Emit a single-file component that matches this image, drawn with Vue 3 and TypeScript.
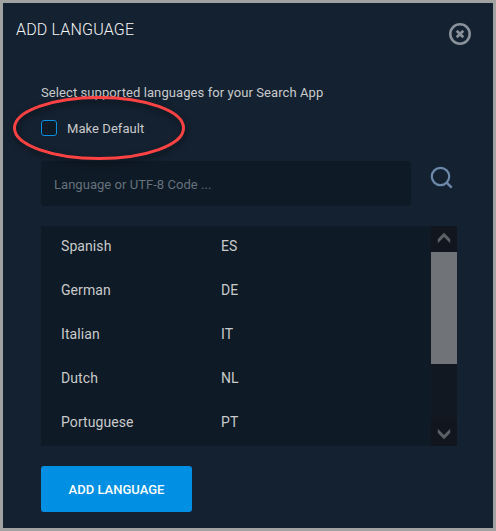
<script setup lang="ts">
import { ref } from 'vue'

interface Language {
  name: string
  code: string
}

const languages: Language[] = [
  { name: 'Spanish', code: 'ES' },
  { name: 'German', code: 'DE' },
  { name: 'Italian', code: 'IT' },
  { name: 'Dutch', code: 'NL' },
  { name: 'Portuguese', code: 'PT' },
]

const query = ref('')
const makeDefault = ref(false)
</script>

<template>
  <section class="dialog">
    <header class="header">
      <h1 class="title">ADD LANGUAGE</h1>
      <button class="close" type="button" aria-label="Close">
        <svg width="24" height="24" viewBox="0 0 24 24" fill="none">
          <circle cx="12" cy="12" r="9.7" stroke="#89929a" stroke-width="2.6" />
          <path d="M8.7 8.7l6.6 6.6M15.3 8.7l-6.6 6.6" stroke="#89929a" stroke-width="2.7" />
        </svg>
      </button>
    </header>

    <div class="content">
      <p class="intro">Select supported languages for your Search App</p>
      <label class="default-option">
        <input v-model="makeDefault" class="checkbox" type="checkbox" />
        <span class="default-label">Make Default</span>
        <svg class="highlight" width="200" height="92" viewBox="0 0 200 92" fill="none">
          <ellipse cx="100" cy="46" rx="84.5" ry="30.5" stroke="#fd4244" stroke-width="3" />
        </svg>
      </label>

      <div class="search">
        <input v-model="query" class="search-input" type="text" placeholder="Language or UTF-8 Code ..." />
        <button class="search-button" type="button" aria-label="Search">
          <svg width="24" height="24" viewBox="0 0 24 24" fill="none" stroke="#6c89aa" stroke-width="2.2">
            <circle cx="10.5" cy="10.5" r="8.7" />
            <path d="M16.6 16.6l5.1 5.1" stroke-width="2.5" />
          </svg>
        </button>
      </div>

      <div class="list">
        <ul class="rows">
          <li v-for="language in languages" :key="language.code" class="row">
            <span>{{ language.name }}</span>
            <span>{{ language.code }}</span>
          </li>
        </ul>
        <div class="scrollbar">
          <div class="arrow arrow-up">
            <svg width="14" height="12" viewBox="0 0 14 12"><path d="M7 .7L13.2 7v4.2L7 5.1.8 11.2V7z" fill="#5c5f64" /></svg>
          </div>
          <div class="thumb"></div>
          <div class="arrow arrow-down">
            <svg width="14" height="12" viewBox="0 0 14 12"><path d="M7 11.3L13.2 5V.8L7 6.9.8.8V5z" fill="#5c5f64" /></svg>
          </div>
        </div>
      </div>

      <button class="submit" type="button">ADD LANGUAGE</button>
    </div>
  </section>
</template>

<style>
body {
  background: #142130;
}
</style>

<style scoped>
.dialog {
  box-sizing: border-box;
  width: 496px;
  height: 531px;
  border: 3px solid #a2a2a2;
  background: #142130;
  color: #c9cacb;
  font-family: Roboto, "Liberation Sans", sans-serif;
  overflow: hidden;
}

button {
  padding: 0;
  border: 0;
  background: none;
  font-family: inherit;
}

svg {
  display: block;
}

.header {
  display: flex;
  justify-content: space-between;
  align-items: flex-start;
  height: 78px;
  padding: 17px 21px 0 13px;
  box-sizing: border-box;
}

.title {
  margin: 0;
  font-size: 16px;
  line-height: 20px;
  font-weight: 300;
  letter-spacing: 0.18px;
  color: #f4f5f6;
}

.close {
  margin-top: 2px;
}

.content {
  padding: 0 33px 0 38px;
}

.intro {
  margin: 0;
  font-size: 13px;
  line-height: 24px;
  letter-spacing: 0.085px;
}

.default-option {
  position: relative;
  display: flex;
  align-items: center;
  gap: 10px;
  height: 46px;
  width: 120px;
  font-size: 13px;
  letter-spacing: 0.06px;
}

.checkbox {
  appearance: none;
  box-sizing: border-box;
  width: 16px;
  height: 16px;
  margin: 0;
  border: 1px solid #078fe2;
  border-radius: 3px;
  background: #0e1a26;
}

.default-label {
  white-space: nowrap;
}

.highlight {
  position: absolute;
  left: -42px;
  top: -23px;
  filter: drop-shadow(1px 3px 3px rgba(0, 0, 0, 0.5));
  pointer-events: none;
}

.search {
  display: flex;
  gap: 19px;
  margin-top: 10px;
}

.search-input {
  box-sizing: border-box;
  width: 370px;
  height: 45px;
  padding: 2px 13px 0;
  border: 0;
  border-radius: 4px;
  background: #0e1a26;
  color: #c9cacb;
  font: 13px Roboto, "Liberation Sans", sans-serif;
  letter-spacing: 0.04px;
}

.search-input::placeholder {
  color: #66717b;
}

.search-button {
  align-self: flex-start;
  margin-top: 5px;
}

.list {
  display: flex;
  width: 416px;
  height: 220px;
  margin-top: 20px;
  background: #0e1a26;
}

.rows {
  flex: 1;
  margin: 0;
  padding: 0;
  list-style: none;
}

.row {
  display: grid;
  grid-template-columns: 160px 1fr;
  align-items: center;
  height: 44px;
  padding: 0 20px 4px;
  box-sizing: border-box;
  font-size: 14px;
  line-height: 40px;
  letter-spacing: 0.08px;
}

.scrollbar {
  display: flex;
  flex-direction: column;
  width: 26px;
  background: #121822;
}

.arrow {
  display: flex;
  justify-content: center;
  align-items: center;
  box-sizing: border-box;
  height: 26px;
  background: #11161e;
}

.arrow-up {
  padding-bottom: 2px;
}

.arrow-down {
  margin-top: auto;
  padding-top: 2px;
}

.thumb {
  height: 112px;
  background: #707378;
}

.submit {
  display: block;
  width: 151px;
  height: 46px;
  margin-top: 20px;
  padding-top: 2px;
  border-radius: 3px;
  background: #008fe2;
  color: #fff;
  font-size: 13px;
  font-weight: 500;
  line-height: 44px;
}
</style>
